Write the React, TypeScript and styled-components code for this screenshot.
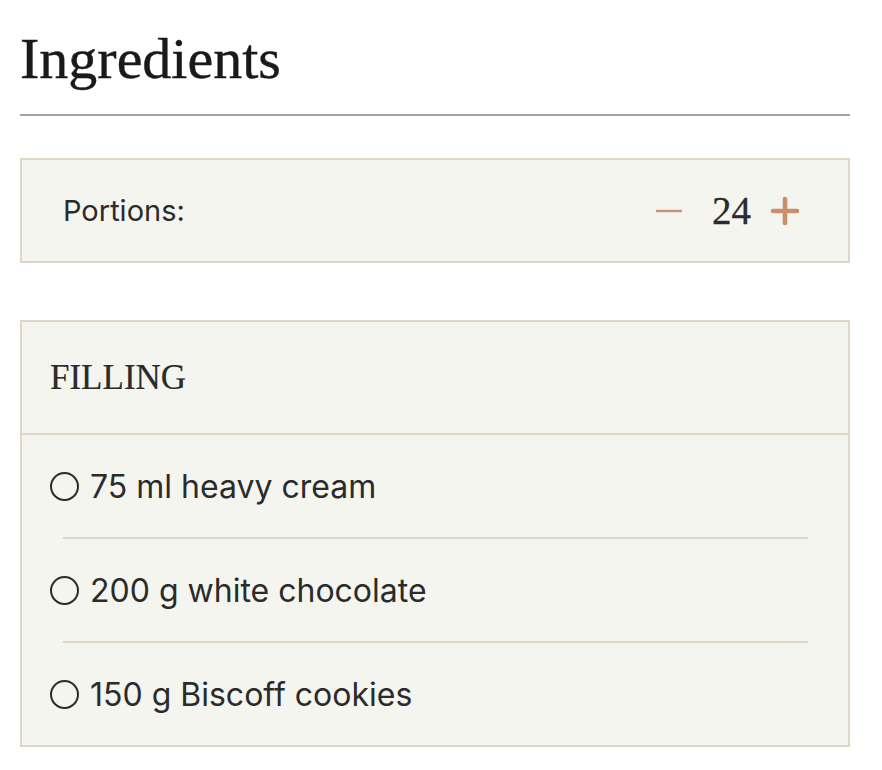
import styled, { createGlobalStyle } from "styled-components"

const GlobalStyle = createGlobalStyle`
    body {
        margin : 0;
        background : #ffffff;
        font-family : Inter, "Noto Sans", sans-serif;
        color : #2b2b2b;
    }
`

const ingredients = [
    "75 ml heavy cream",
    "200 g white chocolate",
    "150 g Biscoff cookies",
]

function MinusIcon() {
    return (
        <svg width="26" height="4" viewBox="0 0 26 4">
            <line x1="0" y1="2" x2="26" y2="2" stroke="#c8946e" strokeWidth="2.4" />
        </svg>
    )
}

function PlusIcon() {
    return (
        <svg width="30" height="30" viewBox="0 0 30 30">
            <path d="M15 3 V27 M3 15 H27" stroke="#c8906a" strokeWidth="4.6" strokeLinecap="round" />
        </svg>
    )
}

function App() {
    return (
        <>
            <GlobalStyle />
            <Page>
                <Title>Ingredients</Title>
                <Divider />
                <PortionsBox>
                    <PortionsLabel>Portions:</PortionsLabel>
                    <Stepper>
                        <StepButton type="button" aria-label="decrease">
                            <MinusIcon />
                        </StepButton>
                        <Count $left={30} $right={19}>24</Count>
                        <StepButton type="button" aria-label="increase">
                            <PlusIcon />
                        </StepButton>
                    </Stepper>
                </PortionsBox>
                <GroupCard>
                    <GroupHeader>FILLING</GroupHeader>
                    <ItemList>
                        {ingredients.map((text, idx) => (
                            <ItemRow key={idx}>
                                <Check />
                                <span>{text}</span>
                            </ItemRow>
                        ))}
                    </ItemList>
                </GroupCard>
            </Page>
        </>
    )
}

export default App


const Page = styled.div`
    width : 830px;
    padding : 30px 0 0 20px;
    display : flex;
    flex-direction : column;
`

const Title = styled.h1`
    margin : 0;
    font-family : "Liberation Serif", "Times New Roman", serif;
    font-weight : 400;
    font-size : 58px;
    line-height : 1;
    color : #1a1a1a;
    -webkit-text-stroke : 0.4px #1a1a1a;
`

const Divider = styled.div`
    margin-top : 26px;
    height : 2px;
    background : #a3a3a3;
`

const PortionsBox = styled.div`
    margin-top : 42px;
    height : 101px;
    border : 2px solid #e0d6c5;
    background : #f5f5f0;
    display : flex;
    align-items : center;
    justify-content : space-between;
    padding : 0 48px 0 41px;
`

const PortionsLabel = styled.span`
    font-size : 29px;
`

const Stepper = styled.div`
    display : flex;
    align-items : center;
`

const StepButton = styled.button`
    border : none;
    background : none;
    padding : 0;
    display : flex;
    align-items : center;
    cursor : pointer;
`

const Count = styled.span<{ $left: number, $right: number }>`
    font-family : "Liberation Serif", "Times New Roman", serif;
    font-size : 39px;
    line-height : 1;
    color : #2b2b2b;
    -webkit-text-stroke : 0.3px #2b2b2b;
    margin : 0 ${p => p.$right}px 0 ${p => p.$left}px;
`

const GroupCard = styled.div`
    margin-top : 57px;
    border : 2px solid #e0d6c5;
    background : #f5f5f0;
`

const GroupHeader = styled.div`
    height : 111px;
    display : flex;
    align-items : center;
    padding-left : 28px;
    border-bottom : 2px solid #e0d6c5;
    font-family : "Liberation Serif", "Times New Roman", serif;
    font-size : 35px;
    color : #2b2b2b;
    -webkit-text-stroke : 0.2px #2b2b2b;
`

const ItemList = styled.ul`
    list-style : none;
    margin : 0;
    padding : 0;
`

const ItemRow = styled.li`
    height : 102px;
    display : flex;
    align-items : center;
    gap : 11px;
    padding-left : 28px;
    font-size : 32px;
    color : #2b2b2b;
    position : relative;
    & + &::before {
        content : "";
        position : absolute;
        top : -2px;
        left : 41px;
        right : 40px;
        height : 2px;
        background : #e0d6c5;
    }
    & + & {
        margin-top : 2px;
    }
`

const Check = styled.span`
    width : 25px;
    height : 25px;
    border : 2.8px solid #2b2b2b;
    border-radius : 50%;
    flex-shrink : 0;
`
